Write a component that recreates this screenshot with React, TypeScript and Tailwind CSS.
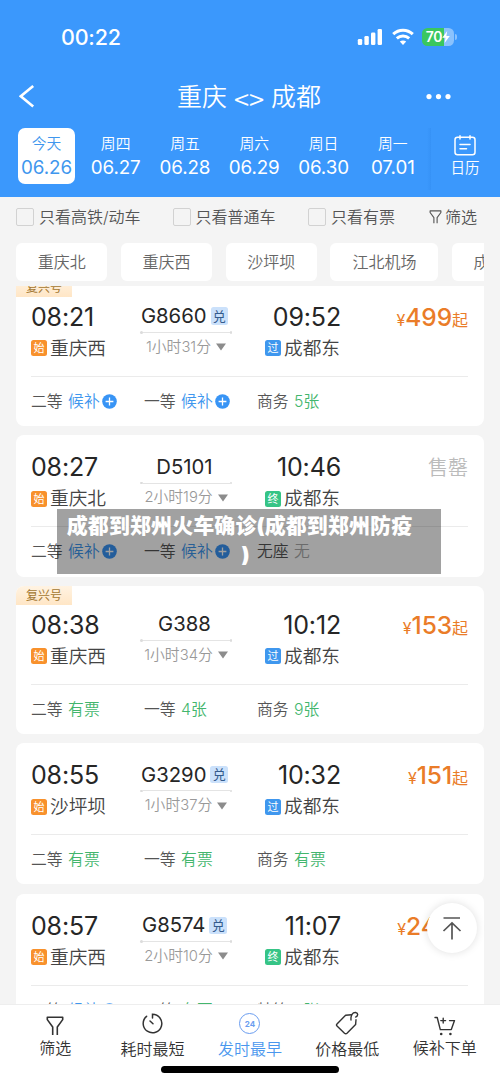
import type { ReactNode } from 'react';

type Tone = 'wait' | 'ok' | 'none';

interface Seat {
  label: string;
  value: string;
  tone: Tone;
}

interface Train {
  tag?: boolean;
  depart: string;
  arrive: string;
  from: string;
  to: string;
  end: '过' | '终';
  code: string;
  redeem?: boolean;
  duration: string;
  price?: string;
  seats: Seat[];
}

const days = [
  ['周四', '06.27'],
  ['周五', '06.28'],
  ['周六', '06.29'],
  ['周日', '06.30'],
  ['周一', '07.01'],
];

const trains: Train[] = [
  {
    tag: true, depart: '08:21', arrive: '09:52', from: '重庆西', to: '成都东', end: '过', code: 'G8660', redeem: true,
    duration: '1小时31分', price: '499',
    seats: [{ label: '二等', value: '候补', tone: 'wait' }, { label: '一等', value: '候补', tone: 'wait' }, { label: '商务', value: '5张', tone: 'ok' }],
  },
  {
    depart: '08:27', arrive: '10:46', from: '重庆北', to: '成都东', end: '终', code: 'D5101',
    duration: '2小时19分',
    seats: [{ label: '二等', value: '候补', tone: 'wait' }, { label: '一等', value: '候补', tone: 'wait' }, { label: '无座', value: '无', tone: 'none' }],
  },
  {
    tag: true, depart: '08:38', arrive: '10:12', from: '重庆西', to: '成都东', end: '过', code: 'G388',
    duration: '1小时34分', price: '153',
    seats: [{ label: '二等', value: '有票', tone: 'ok' }, { label: '一等', value: '4张', tone: 'ok' }, { label: '商务', value: '9张', tone: 'ok' }],
  },
  {
    depart: '08:55', arrive: '10:32', from: '沙坪坝', to: '成都东', end: '过', code: 'G3290', redeem: true,
    duration: '1小时37分', price: '151',
    seats: [{ label: '二等', value: '有票', tone: 'ok' }, { label: '一等', value: '有票', tone: 'ok' }, { label: '商务', value: '有票', tone: 'ok' }],
  },
  {
    depart: '08:57', arrive: '11:07', from: '重庆西', to: '成都东', end: '终', code: 'G8574', redeem: true,
    duration: '2小时10分', price: '246',
    seats: [{ label: '二等', value: '候补', tone: 'wait' }, { label: '一等', value: '有票', tone: 'ok' }, { label: '特等', value: '5张', tone: 'ok' }],
  },
];

const toneClass: Record<Tone, string> = {
  wait: 'text-[#3f97ee]',
  ok: 'text-[#43b66d]',
  none: 'text-[#aaaaaa]',
};

function StatusBar() {
  return (
    <div className="flex h-[74px] items-center pl-[61px] pr-[43px] text-white">
      <span className="pt-px text-[21.5px] font-medium leading-none tracking-[-0.2px]">00:22</span>
      <svg className="ml-auto" width="26" height="18" viewBox="0 0 26 18" fill="currentColor">
        <rect x="1.8" y="11" width="4.4" height="6" rx="1.3" />
        <rect x="8.4" y="8" width="4.4" height="9" rx="1.3" />
        <rect x="15" y="4.5" width="4.4" height="12.5" rx="1.3" />
        <rect x="21.6" y="1" width="4.4" height="16" rx="1.3" />
      </svg>
      <svg className="ml-[10px] mr-[-1px]" width="22" height="18" viewBox="0 0 22 18" fill="none" stroke="currentColor" strokeWidth="3">
        <path d="M1.2 6.2C6.8 0.9 15.2 0.9 20.8 6.2" />
        <path d="M4.8 10.4C8.4 7.1 13.6 7.1 17.2 10.4" />
        <path d="M11 17L7.8 13.6C9.6 12 12.4 12 14.2 13.6Z" fill="currentColor" stroke="none" />
      </svg>
      <div className="ml-[9px] flex h-[18px] w-[32px] items-center justify-center rounded-[5.5px] bg-linear-to-r from-[#3ac75f] from-70% to-[#8ac2fd] to-70%">
        <span className="text-[14px] font-semibold leading-none tracking-[-0.2px]">70</span>
        <svg width="8" height="12" viewBox="0 0 8 12" fill="currentColor"><path d="M5.2 0L0.3 6.8H3.5L2.6 12L7.8 5H4.4Z" /></svg>
      </div>
      <span className="ml-[1px] h-[6px] w-[2px] rounded-r-full bg-[#8ac2fd]" />
    </div>
  );
}

function Header() {
  return (
    <header className="h-[197px] bg-[#3b98fc] text-white">
      <StatusBar />
      <div className="flex h-[46px] items-center pl-[19px] pr-[49px]">
        <svg width="16" height="24" viewBox="0 0 16 24" fill="none" stroke="currentColor" strokeWidth="2.6"><path d="M14.2 1L1.8 11.3L14.2 21.5" /></svg>
        <div className="flex flex-1 items-center justify-center gap-[7px] pl-[38px] pt-px text-[25px] font-[350] leading-none">
          <span>重庆</span>
          <span className="pt-[2px] font-['Noto_Sans_CJK_SC'] text-[27.5px]">&lt;&gt;</span>
          <span>成都</span>
        </div>
        <svg width="26" height="6" viewBox="0 0 26 6" fill="currentColor"><circle cx="4" cy="2.6" r="2.6" /><circle cx="13.5" cy="2.6" r="2.6" /><circle cx="23" cy="2.6" r="2.6" /></svg>
      </div>
      <div className="flex pl-[18px] pt-[8px]">
        <div className="flex h-[56px] w-[57px] flex-col items-center rounded-[7px] bg-white text-[#3f97ee]">
          <Day name="今天" date="06.26" />
        </div>
        <div className="ml-[6px] flex">
          {days.map(([name, date]) => (
            <div key={date} className="flex h-[56px] w-[69.3px] flex-col items-center">
              <Day name={name} date={date} />
            </div>
          ))}
        </div>
        <div className="h-[62px] w-[4px] bg-linear-to-l from-[#3692f6] to-[#3b98fc]" />
        <div className="ml-[3px] flex h-[56px] w-[61px] flex-col items-center pt-[7px]">
          <svg width="22" height="21" viewBox="0 0 22 21" fill="none" stroke="currentColor" strokeWidth="1.5" strokeLinecap="round">
            <rect x="1" y="2.2" width="20" height="17.6" rx="2.5" />
            <path d="M6 0.8V4M16 0.8V4M6 9.5H16M6 13.8H12.5" />
          </svg>
          <span className="mt-[4px] text-[14.5px] font-[350] leading-[16px]">日历</span>
        </div>
      </div>
    </header>
  );
}

function Day({ name, date }: { name: string; date: string }) {
  return (
    <>
      <span className="mt-[7.5px] text-[14.8px] font-[350] leading-[17px]">{name}</span>
      <span className="mt-[5.5px] text-[18.8px] leading-[20px] tracking-[-0.1px]">{date}</span>
    </>
  );
}

function FunnelIcon({ className }: { className: string }) {
  return (
    <svg className={className} viewBox="0 0 18 20" fill="none" stroke="currentColor" strokeWidth="1.6" strokeLinejoin="round">
      <path d="M6.7 19V11L1.3 3.6V1.3H16.7V3.6L11.3 11V19" />
    </svg>
  );
}

function Check({ className, children }: { className: string; children: ReactNode }) {
  return (
    <label className={`flex items-center gap-[5px] ${className}`}>
      <span className="size-[18px] rounded-[2px] border border-[#d2d2d2]" />
      <span>{children}</span>
    </label>
  );
}

function Filters() {
  return (
    <div className="flex h-[39px] shrink-0 items-center pl-[16px] text-[16px] font-[350] leading-none text-[#555]">
      <Check className="w-[156.5px]">只看高铁/动车</Check>
      <Check className="w-[135.5px]">只看普通车</Check>
      <Check className="w-[121px]">只看有票</Check>
      <FunnelIcon className="h-[14px] w-[13px]" />
      <span className="ml-[3px]">筛选</span>
    </div>
  );
}

function Chip({ children, wide }: { children: ReactNode; wide?: boolean }) {
  return (
    <div className={`flex h-[38px] shrink-0 items-center justify-center rounded-[6px] bg-white text-[16px] font-[350] leading-none text-[#666] ${wide ? 'w-[108px]' : 'w-[91.3px]'}`}>
      {children}
    </div>
  );
}

function Station({ mark, name }: { mark: string; name: string }) {
  const color = mark === '始' ? 'bg-[#f8912c]' : mark === '过' ? 'bg-[#3f97ee]' : 'bg-[#36c486]';
  return (
    <div className="flex h-[22px] items-center gap-[3px]">
      <span className={`mb-px flex size-[16px] shrink-0 items-center justify-center rounded-[2.5px] pt-px text-[11px] leading-none text-white ${color}`}>{mark}</span>
      <span className="whitespace-nowrap text-[18.7px] font-[350] leading-[22px] text-[#444]">{name}</span>
    </div>
  );
}

function PlusDot() {
  return (
    <svg className="ml-[2px]" width="15" height="15" viewBox="0 0 15 15">
      <circle cx="7.5" cy="7.5" r="7.3" fill="#3894f5" />
      <path d="M7.5 3.6V11.4M3.6 7.5H11.4" stroke="#fff" strokeWidth="1.3" />
    </svg>
  );
}

function TrainCard({ t }: { t: Train }) {
  return (
    <article className={`shrink-0 overflow-hidden rounded-[8px] bg-white ${t.tag ? 'h-[148px]' : 'h-[141.3px]'}`}>
      {t.tag && (
        <div className="flex h-[18.7px] w-[56px] items-center justify-center bg-linear-to-b from-[#fff3e2] to-[#ffe6c6] pt-px text-[12px] leading-none text-[#a37832]">复兴号</div>
      )}
      <div className={`flex pl-[15px] pr-[16px] ${t.tag ? 'pt-[8px]' : 'pt-[20px]'}`}>
        <div className="flex w-[109px] flex-col gap-[9px]">
          <span className="text-[25px] leading-[24px] tracking-[-0.15px] text-[#262626]">{t.depart}</span>
          <Station mark="始" name={t.from} />
        </div>
        <div className="flex w-[92px] flex-col items-center">
          <div className="flex h-[23px] items-center gap-[4px] pr-[3px]">
            <span className="text-[20.3px] leading-none text-[#262626]">{t.code}</span>
            {t.redeem && <span className="flex size-[17.5px] items-center justify-center rounded-[2.5px] bg-[#cbe1fb] text-[13px] leading-none text-[#345b8c]">兑</span>}
          </div>
          <div className="mt-[3.5px] flex w-full items-center">
            <span className="size-[2.5px] rounded-full bg-[#dcdcdc]" />
            <span className="h-px flex-1 bg-[#e4e4e4]" />
            <span className="size-[2.5px] rounded-full bg-[#dcdcdc]" />
          </div>
          <div className="mt-[5px] flex items-center gap-[5px] whitespace-nowrap text-[14.8px] font-[350] leading-[17px] text-[#999]">
            {t.duration}
            <svg width="10" height="8" viewBox="0 0 10 8" fill="#8c8c8c"><path d="M0 0.5H10L5 7.5Z" /></svg>
          </div>
        </div>
        <div className="ml-[33px] flex w-[76px] flex-col gap-[9px]">
          <span className="self-end text-[25px] leading-[24px] tracking-[-0.15px] text-[#262626]">{t.arrive}</span>
          <Station mark={t.end} name={t.to} />
        </div>
        {t.price ? (
          <div className="ml-auto flex h-[24px] items-baseline text-[#ea7c28]">
            <span className="text-[16px] leading-[24px]">¥</span>
            <span className="text-[24.5px] font-[450] leading-[24px] tracking-[-0.1px]">{t.price}</span>
            <span className="text-[16px] leading-[24px]">起</span>
          </div>
        ) : (
          <span className="ml-auto pt-px text-[20px] font-[350] leading-[25px] text-[#bbb]">售罄</span>
        )}
      </div>
      <div className={`ml-[15px] mr-[16px] h-px bg-[#ebebeb] ${t.price ? 'mt-[16px]' : 'mt-[16px]'}`} />
      <div className="flex pl-[15px] pt-[15px] text-[15.8px] font-[350] leading-[19px] text-[#555]">
        {t.seats.map((s) => (
          <div key={s.label} className="flex w-[113px] items-center">
            <span>{s.label}</span>
            <span className={`ml-[5.5px] ${toneClass[s.tone]}`}>{s.value}</span>
            {s.tone === 'wait' && <PlusDot />}
          </div>
        ))}
      </div>
    </article>
  );
}

function NavItem({ icon, label, active, high }: { icon: ReactNode; label: string; active?: boolean; high?: boolean }) {
  return (
    <div className={`flex w-[97.4px] flex-col items-center ${active ? 'text-[#4a97ee]' : 'text-[#333]'}`}>
      <div className="flex h-[28px] items-end">{icon}</div>
      <span className={`text-[16px] font-[350] leading-[20px] ${high ? 'mt-[3.5px]' : 'mt-[5px]'}`}>{label}</span>
    </div>
  );
}

function BottomNav() {
  return (
    <nav className="flex h-[79px] shrink-0 flex-col items-center border-t border-[#eeeeee] bg-white">
      <div className="flex h-[61px] w-[487px] pt-[1px]">
        <NavItem high label="筛选" icon={<FunnelIcon className="mb-[-2px] h-[20px] w-[18px]" />} />
        <NavItem
          label="耗时最短"
          icon={
            <svg width="21" height="21" viewBox="0 0 21 21" fill="none" stroke="currentColor" strokeWidth="1.5" strokeLinecap="round">
              <path d="M10.5 5V1.2A9.3 9.3 0 1 1 4.6 3.3" />
              <path d="M8 8L11 10.8" />
            </svg>
          }
        />
        <NavItem
          active
          label="发时最早"
          icon={
            <span className="flex size-[21px] items-center justify-center rounded-full border-[1.5px] border-[#6a9df0] text-[8px] font-bold leading-none text-[#6a9df0]">24</span>
          }
        />
        <NavItem
          label="价格最低"
          icon={
            <svg className="mb-[-1px]" width="24" height="24" viewBox="0 0 24 24" fill="none" stroke="currentColor" strokeWidth="1.4" strokeLinecap="round" strokeLinejoin="round">
              <path d="M16.5 3.8L10.6 4.2L2 13Q1 14 2 15L9.5 22.2Q10.8 23.3 12 22.2L20.6 13.6L21 8.7" />
              <path d="M16 9C15.6 4 17.6 1.3 20.6 1.5C23.4 1.9 23.4 5 20.6 6.1" />
            </svg>
          }
        />
        <NavItem
          high
          label="候补下单"
          icon={
            <svg className="mb-[-2px]" width="22" height="20" viewBox="0 0 22 20" fill="none" stroke="currentColor" strokeWidth="1.4" strokeLinecap="round" strokeLinejoin="round">
              <path d="M1 1.5H3.2L6.3 13.6H17.3L20.5 4.6H15.5M9.2 2.2V7M6.8 4.6H11.6" />
              <circle cx="7.2" cy="18" r="1.3" fill="currentColor" stroke="none" />
              <circle cx="16.4" cy="18" r="1.3" fill="currentColor" stroke="none" />
            </svg>
          }
        />
      </div>
      <div className="h-[7px] w-[178px] rounded-full bg-black" />
    </nav>
  );
}

export default function App() {
  return (
    <div className="relative flex h-[1083px] w-[500px] flex-col overflow-hidden bg-[#f4f4f4] font-['Inter','Noto_Sans_CJK_SC',sans-serif]">
      <Header />
      <Filters />
      <div className="mx-[16px] mt-[7px] flex h-[38px] shrink-0 gap-[13.5px] overflow-hidden">
        <Chip>重庆北</Chip>
        <Chip>重庆西</Chip>
        <Chip>沙坪坝</Chip>
        <Chip wide>江北机场</Chip>
        <Chip>成都东</Chip>
      </div>
      <main className="mx-[16px] mt-[5px] min-h-0 flex-1 overflow-hidden">
        <div className="mt-[-8px] flex flex-col gap-[9.3px]">
          {trains.map((t) => <TrainCard key={t.depart} t={t} />)}
        </div>
      </main>
      <BottomNav />
      <button className="absolute left-[427px] top-[903px] flex size-[50px] items-center justify-center rounded-full bg-white text-[#555] shadow-[0_0_9px_rgba(0,0,0,0.13)]">
        <svg width="20" height="24" viewBox="0 0 20 24" fill="none" stroke="currentColor" strokeWidth="1.7"><path d="M1.5 2H18M10 23.5V7.5M1.5 15L10 7L18.5 15" /></svg>
      </button>
      <div className="absolute left-[57px] top-[509px] flex h-[65px] w-[384px] flex-col items-center bg-black/37 pt-[2px] text-[21px] font-black leading-[29px] text-white">
        <span className="whitespace-nowrap pr-[19px] tracking-[0.08px]">成都到郑州火车确诊(成都到郑州防疫</span>
        <span className="pr-[7px]">)</span>
      </div>
    </div>
  );
}
